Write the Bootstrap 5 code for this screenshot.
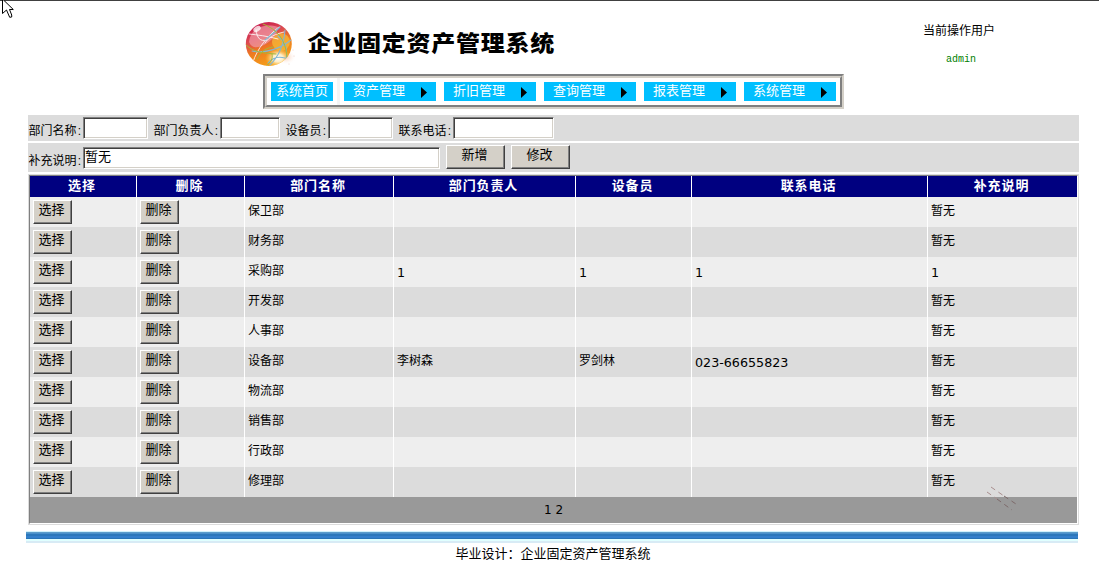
<!DOCTYPE html>
<html lang="zh-CN">
<head>
<meta charset="utf-8">
<title>企业固定资产管理系统</title>
<link href="https://cdn.jsdelivr.net/npm/bootstrap@5.3.0/dist/css/bootstrap.min.css" rel="stylesheet">
<style>
body{font-family:"Liberation Sans","Noto Sans CJK SC",sans-serif;font-size:12px;line-height:16px;color:#000;background:#fff;height:583px;overflow:hidden;border-top:1px solid #404040}
.masthead{height:73px;padding-left:245px;padding-top:21px}
.sitename{font-size:24px;font-weight:900;line-height:24px;letter-spacing:.75px;margin-left:12.5px;margin-top:9px;transform:scaleY(.92)}
.who{width:76px;margin-left:368px;margin-top:1px;white-space:nowrap}
.who .admin{color:#008000;font:10px/14px "Liberation Mono",monospace;margin-top:14px}
.menubar{width:581px;height:35px;margin-left:263px;border:2px solid;border-color:#808080 #d4d0c8 #d4d0c8 #808080}
.menubar-in{height:31px;border:2px solid;border-color:#d4d0c8 #808080 #808080 #d4d0c8;padding-left:4px}
.menu-home,.menu-item{height:19px;background:#00bfff;color:#fff;font-size:13px;line-height:17px;text-decoration:none;white-space:nowrap;margin-top:4px}
.menu-home{width:62px;text-align:center}
.menu-rule{width:3px;height:27px;background:#f5f5f5;margin:0 4px}
.menu-item{width:92px;margin-right:8px;padding-left:9px;padding-right:9px}
.menu-item svg{margin-top:5px}
.content-area{width:1051px;margin-left:28px;margin-top:6px}
.formbar{background:#dcdcdc;margin-bottom:2px}
.bar1{height:26px}.bar2{height:29px}
.formbar label{padding-left:.5px;white-space:nowrap;line-height:16px}
.bar1 label{margin-top:8px}.bar2 label{margin-top:10px}
.formbar label i{font-style:normal;display:inline-block;width:6px;text-align:center}
.field{height:22px;border:1px solid;border-color:#808080 #fff #fff #808080;box-shadow:inset 1px 1px #404040,inset -1px -1px #d4d0c8;background:#fff;font-size:13px;line-height:18px;padding:0 1px;border-radius:0;color:#000;flex:none}
.push{background:#d4d0c8;border:1px solid;border-color:#fff #404040 #404040 #fff;box-shadow:inset -1px -1px #808080;border-radius:0;font-size:13px;line-height:17px;padding:0 2px 5px 0;height:24px;color:#000;display:block;text-align:center}
.push.wide{width:59px;margin-top:2px}
.push.slim{width:39px}
.gridbox{border:1px solid #dcdcdc;height:351px}
.gridbox-in{border:1px solid;border-color:#808080 #fff #fff #808080}
.gridtable{width:1047px;table-layout:fixed;border-collapse:separate;border-spacing:0}
.gridtable th{background:#000080;color:#fff;font-size:13px;letter-spacing:.9px;height:21px;line-height:18px;padding:0 2px 1px 0;text-align:center;border-left:1px solid #fff}
.gridtable td{height:30px;padding:0 3px 3px;border-left:1px solid #fff;line-height:16px;vertical-align:middle}
.gridtable th:first-child,.gridtable td:first-child{border-left:0}
.gridtable td.act{padding:3px 3px}
.gridtable tbody tr:nth-child(odd){background:#eee}
.gridtable tbody tr:nth-child(even){background:#dcdcdc}
.gridtable .num{font-family:"DejaVu Sans",sans-serif;font-size:12.7px;padding:2px 3px 0}
.pager{background:#999;height:26px;font:12px/27px "DejaVu Sans",sans-serif;padding-left:514px}
.strip{width:1052px;height:12px;margin:6px 0 0 26px;background:linear-gradient(#d0f2fc 0 1px,#5b9ccb 1px 2px,#4a91cb 2px 3px,#2b78bb 3px 5px,#337fcb 5px 7px,#2875b8 7px 8px,#e0ffff 8px 10px,#d8ebf5 10px)}
.foot{font-size:13px;line-height:18px;margin-top:2px;padding-left:7px}
.pointer{left:1px;top:0}
.scratch{left:986px;top:486px}
</style>
</head>
<body>
<svg class="pointer position-absolute" width="14" height="19"><path d="M1.5-1V13.5L5.5 10l3.2 7.3 2-.3V15L8.500 9.500h3.800L1.500-1z" fill="#fff" stroke="#000"/></svg>
<header class="masthead d-flex">
<svg class="flex-shrink-0" width="50" height="46" viewBox="0 0 50 46">
<defs><linearGradient id="ball" x1=".15" y1="0" x2=".6" y2="1"><stop offset="0" stop-color="#c2104f"/><stop offset=".35" stop-color="#dd4a50"/><stop offset=".58" stop-color="#ee7a20"/><stop offset="1" stop-color="#f6a518"/></linearGradient>
<radialGradient id="glow"><stop stop-color="#fff"/><stop offset=".4" stop-color="#fff6d8" stop-opacity=".9"/><stop offset="1" stop-color="#ffc43a" stop-opacity="0"/></radialGradient>
<radialGradient id="cast"><stop stop-color="#f9cbb0"/><stop offset="1" stop-color="#fff" stop-opacity="0"/></radialGradient>
<clipPath id="disc"><ellipse cx="23.8" cy="22" rx="23" ry="22"/></clipPath></defs>
<ellipse cx="41" cy="35" rx="10" ry="8" fill="url(#cast)"/>
<g clip-path="url(#disc)"><path fill="url(#ball)" d="M0 0h48v45H0z"/>
<path d="M4 20C5 8 17 0 33 5c-1 8-7 14-14 18-6 3-12 4-15-3z" fill="#f09aa6" opacity=".7"/>
<ellipse cx="33" cy="36" rx="13" ry="10" fill="url(#glow)"/><ellipse cx="36" cy="20" rx="9" ry="9" fill="#f7bd39" opacity=".7"/>
<ellipse cx="12" cy="7" rx="4" ry="2.5" fill="#fff" opacity=".75" transform="rotate(-30 12 7)"/>
<g fill="none" stroke-linecap="round"><g stroke="#fff" stroke-width="1" opacity=".8"><path d="M4 12c9 1 18 2 29 5M34 5C23 13 12 27 8 40M11 8c1 8 4 12 11 10M39 10C30 12 24 15 20 21"/></g>
<g stroke="#83b6d2" stroke-width="1.1"><path d="M40 8c-1 14-6 26-15 35M46 18C36 26 21 32 7 29M33 14c7 6 10 12 8 24M23 41c5-6 10-7 17-5M35 5C30 10 25 14 20 18"/></g>
<g stroke="#a5b83b" stroke-width="1"><path d="M1 23c8 7 15 8 30 9M18 2c14 5 23 16 24 33M12 37c4-8 9-11 16-12M27 32c1 5-1 8-5 11"/></g></g></g>
<g fill="#e8c6b9"><circle cx="48" cy="28" r=".5"/><circle cx="49" cy="34" r=".5"/><circle cx="44" cy="42" r=".5"/></g></svg>
<div class="sitename text-nowrap">企业固定资产管理系统</div>
<div class="who"><div>当前操作用户</div><div class="admin text-center">admin</div></div>
</header>
<nav class="menubar"><div class="menubar-in d-flex">
<a class="menu-home">系统首页</a><div class="menu-rule"></div>
<a class="menu-item d-flex justify-content-between">资产管理<svg width="6" height="11"><path d="M0 0L6 5.5 0 11z"/></svg></a>
<a class="menu-item d-flex justify-content-between">折旧管理<svg width="6" height="11"><path d="M0 0L6 5.5 0 11z"/></svg></a>
<a class="menu-item d-flex justify-content-between">查询管理<svg width="6" height="11"><path d="M0 0L6 5.5 0 11z"/></svg></a>
<a class="menu-item d-flex justify-content-between">报表管理<svg width="6" height="11"><path d="M0 0L6 5.5 0 11z"/></svg></a>
<a class="menu-item d-flex justify-content-between me-0">系统管理<svg width="6" height="11"><path d="M0 0L6 5.5 0 11z"/></svg></a>
</div></nav>
<main class="content-area">
<div class="formbar bar1 d-flex">
<label style="width:55px">部门名称<i>:</i></label><div class="field" style="width:65px;margin-top:2px"></div>
<label style="width:67px;margin-left:5px">部门负责人<i>:</i></label><div class="field" style="width:60px;margin-top:2px"></div>
<label style="width:43px;margin-left:5px">设备员<i>:</i></label><div class="field" style="width:65px;margin-top:2px"></div>
<label style="width:55px;margin-left:5px">联系电话<i>:</i></label><div class="field" style="width:101px;margin-top:2px"></div>
</div>
<div class="formbar bar2 d-flex">
<label style="width:55px">补充说明<i>:</i></label><div class="field" style="width:357px;margin-top:4px">暂无</div>
<button class="push wide" style="margin-left:6px">新增</button><button class="push wide" style="margin-left:6px">修改</button>
</div>
<div class="gridbox"><div class="gridbox-in">
<table class="gridtable">
<colgroup><col style="width:106px"><col style="width:108px"><col style="width:149px"><col style="width:182px"><col style="width:116px"><col style="width:236px"><col style="width:150px"></colgroup>
<thead><tr><th>选择</th><th>删除</th><th>部门名称</th><th>部门负责人</th><th>设备员</th><th>联系电话</th><th>补充说明</th></tr></thead>
<tbody>
<tr><td class="act"><button class="push slim">选择</button></td><td class="act"><button class="push slim">删除</button></td><td>保卫部</td><td></td><td></td><td></td><td>暂无</td></tr>
<tr><td class="act"><button class="push slim">选择</button></td><td class="act"><button class="push slim">删除</button></td><td>财务部</td><td></td><td></td><td></td><td>暂无</td></tr>
<tr><td class="act"><button class="push slim">选择</button></td><td class="act"><button class="push slim">删除</button></td><td>采购部</td><td class="num">1</td><td class="num">1</td><td class="num">1</td><td class="num">1</td></tr>
<tr><td class="act"><button class="push slim">选择</button></td><td class="act"><button class="push slim">删除</button></td><td>开发部</td><td></td><td></td><td></td><td>暂无</td></tr>
<tr><td class="act"><button class="push slim">选择</button></td><td class="act"><button class="push slim">删除</button></td><td>人事部</td><td></td><td></td><td></td><td>暂无</td></tr>
<tr><td class="act"><button class="push slim">选择</button></td><td class="act"><button class="push slim">删除</button></td><td>设备部</td><td>李树森</td><td>罗剑林</td><td class="num">023-66655823</td><td>暂无</td></tr>
<tr><td class="act"><button class="push slim">选择</button></td><td class="act"><button class="push slim">删除</button></td><td>物流部</td><td></td><td></td><td></td><td>暂无</td></tr>
<tr><td class="act"><button class="push slim">选择</button></td><td class="act"><button class="push slim">删除</button></td><td>销售部</td><td></td><td></td><td></td><td>暂无</td></tr>
<tr><td class="act"><button class="push slim">选择</button></td><td class="act"><button class="push slim">删除</button></td><td>行政部</td><td></td><td></td><td></td><td>暂无</td></tr>
<tr><td class="act"><button class="push slim">选择</button></td><td class="act"><button class="push slim">删除</button></td><td>修理部</td><td></td><td></td><td></td><td>暂无</td></tr>
</tbody></table>
<div class="pager">1 2</div>
</div></div>
</main>
<div class="strip"></div>
<footer class="foot text-center">毕业设计：企业固定资产管理系统</footer>
<svg class="scratch position-absolute" width="32" height="26" fill="none"><g stroke="#a98f8f" stroke-dasharray="5 4"><path d="M5 1L18 10M1 6L11 13"/></g><g stroke="#7d6a6a" stroke-dasharray="5 4"><path d="M18 10L30 18M11 13L26 24"/></g></svg>
<script src="https://cdn.jsdelivr.net/npm/bootstrap@5.3.0/dist/js/bootstrap.bundle.min.js"></script>
</body>
</html>
